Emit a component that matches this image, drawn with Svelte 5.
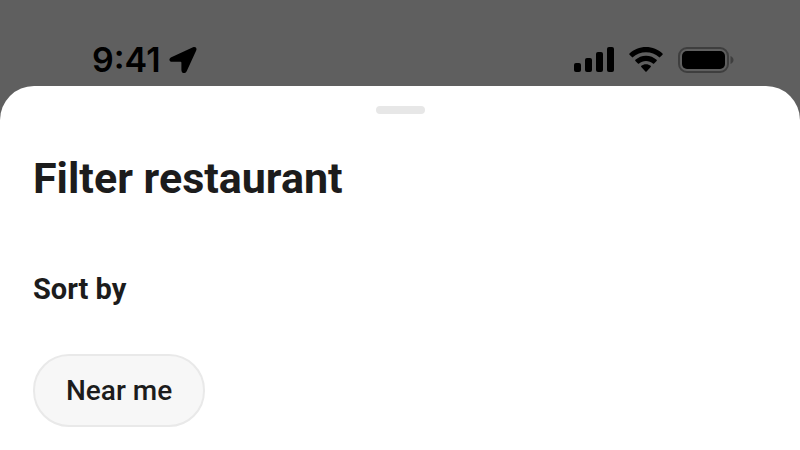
<script lang="ts">
	const sortOptions = ['Near me'];
	let selected = $state('');

	// Signal strength bars, shortest first
	const signalBars = [9, 14, 20, 25];
</script>

<div class="screen">
	<header class="status-bar">
		<div class="clock">
			<time>9:41</time>
			<svg width="28" height="28" viewBox="0 0 28 28" aria-hidden="true">
				<path
					d="M24 1.300 2.300 11.200C-.7 12.700.1 15.800 3.200 15.800H11.500c.6 0 .9.3.9.9V24c0 3.700 3.800 4.200 5.400.9L27.200 4.400C28.200 2.100 26.400.200 24 1.300Z"
				/>
			</svg>
		</div>
		<div class="indicators">
			<svg width="40" height="26" viewBox="0 0 40 26" aria-hidden="true">
				{#each signalBars as height, i}
					<rect x={i * 11} y={25 - height} width="7" {height} rx="2" />
				{/each}
			</svg>
			<svg width="34" height="26" viewBox="0 0 34 26" aria-hidden="true">
				<path
					d="M17 0C10.600 0 4.800 2.500.500 6.500c-.4.4-.4.8 0 1.200l2.400 2.400c.4.4.8.4 1.200 0C7.500 7 12 5.200 17 5.200S26.500 7 29.900 10.100c.4.4.8.4 1.200 0l2.400-2.400c.4-.4.4-.8 0-1.200C29.200 2.500 23.400 0 17 0Z"
				/>
				<path
					d="M17 8.700c-4.100 0-7.800 1.600-10.600 4.100-.4.4-.4.8 0 1.200l2.500 2.400c.4.4.8.4 1.200 0 1.800-1.600 4.200-2.500 6.900-2.500s5.100.9 6.900 2.500c.4.4.8.4 1.200 0l2.500-2.400c.4-.4.4-.8 0-1.200-2.800-2.500-6.500-4.100-10.600-4.100Z"
				/>
				<path
					d="M17 17.200c-1.800 0-3.400.6-4.700 1.600-.4.4-.4.8 0 1.100l4.100 4.500c.4.4.8.4 1.200 0l4.100-4.500c.4-.3.4-.7 0-1.100-1.300-1-2.900-1.600-4.700-1.600Z"
				/>
			</svg>
			<svg width="56" height="26" viewBox="0 0 56 26" aria-hidden="true">
				<rect class="battery-shell" x="1" y="1" width="49" height="24" rx="8" />
				<rect x="4" y="4" width="43" height="18" rx="5" />
				<path class="battery-cap" d="M52.500 9c4 1.500 4 6.500 0 8Z" />
			</svg>
		</div>
	</header>

	<main class="sheet">
		<div class="handle"></div>
		<h1>Filter restaurant</h1>
		<section>
			<h2>Sort by</h2>
			<div class="chips">
				{#each sortOptions as option}
					<button
						type="button"
						class="chip"
						aria-pressed={selected === option}
						onclick={() => (selected = option)}
					>
						{option}
					</button>
				{/each}
			</div>
		</section>
	</main>
</div>

<style>
	:global(body) {
		background: #5f5f5f;
	}

	.screen {
		display: flex;
		flex-direction: column;
		min-height: 100vh;
		color: #1c1c1c;
		font-family: Roboto, 'Liberation Sans', sans-serif;
	}

	/* Status bar */
	.status-bar {
		display: flex;
		align-items: center;
		justify-content: space-between;
		padding: 40px 66px 6px 92px;
		color: #000;
	}
	.clock {
		display: flex;
		align-items: center;
		gap: 8px;
		font-family: Inter, 'Liberation Sans', sans-serif;
		font-size: 34px;
		font-weight: 600;
		line-height: 40px;
	}
	.indicators {
		display: flex;
		align-items: center;
		gap: 15px;
	}
	svg {
		display: block;
		fill: #000;
	}
	.battery-shell {
		fill: none;
		stroke: #3e3e3e;
		stroke-width: 2;
	}
	.battery-cap {
		fill: #3e3e3e;
	}

	/* Bottom sheet */
	.sheet {
		flex: 1;
		padding: 20px 33px 22px;
		background: #fff;
		border-radius: 34px 34px 0 0;
	}
	.handle {
		width: 49px;
		height: 8px;
		margin: 0 auto;
		border-radius: 4px;
		background: #e7e7e7;
	}
	h1 {
		margin: 39px 0 0;
		font-size: 43px;
		font-weight: 700;
		line-height: 50px;
	}
	h2 {
		margin: 69px 0 0;
		font-size: 29px;
		font-weight: 700;
		line-height: 34px;
	}
	.chips {
		display: flex;
		flex-wrap: wrap;
		gap: 16px;
		margin-top: 48px;
	}
	.chip {
		padding: 18px 31px;
		border: 2px solid #e9e9e9;
		border-radius: 36px;
		background: #f7f7f7;
		color: inherit;
		font-family: inherit;
		font-size: 28px;
		font-weight: 500;
		line-height: 33px;
		cursor: pointer;
	}
</style>
